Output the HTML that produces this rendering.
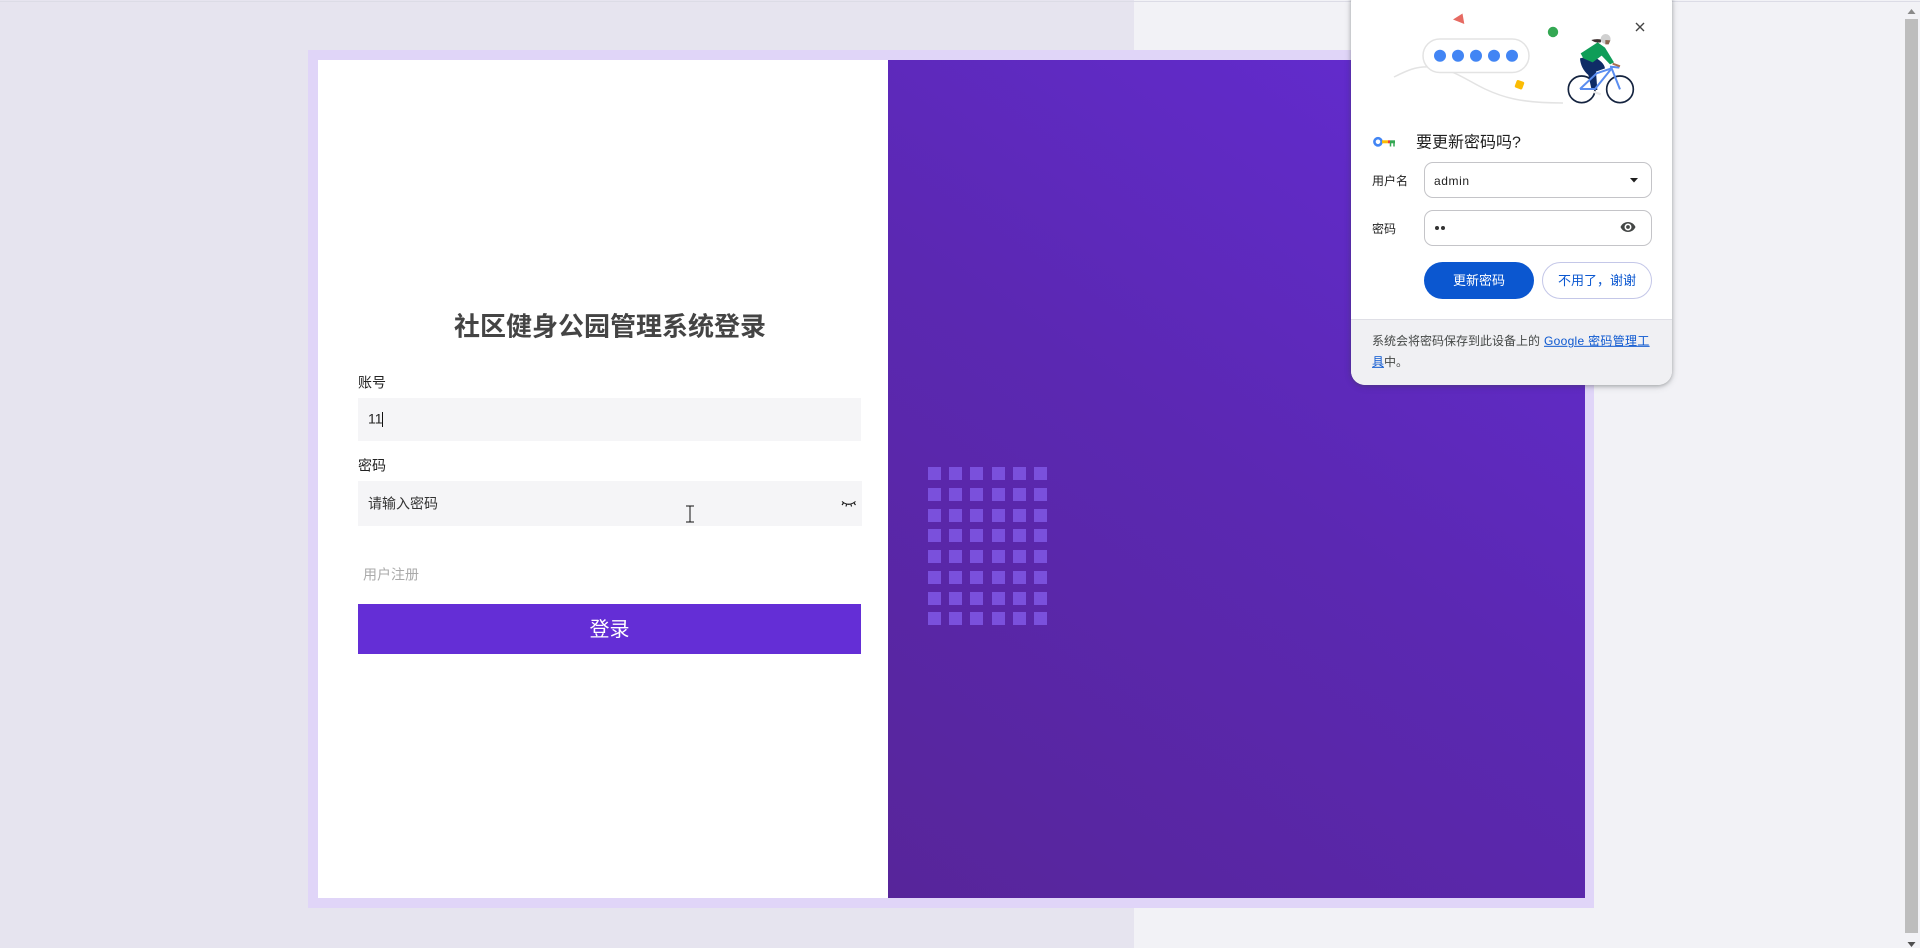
<!DOCTYPE html>
<html lang="zh"><head><meta charset="utf-8"><title>社区健身公园管理系统登录</title>
<style>
html,body{margin:0;padding:0;width:1920px;height:948px;overflow:hidden;background:#f2f2f6;font-family:"Liberation Sans","Noto Sans CJK SC",sans-serif}
div,a,span{position:absolute;white-space:nowrap}
svg{position:absolute}
.sq{width:12.5px;height:12.5px;background:#7a50dc}
.t{transform:translateY(-50%);line-height:1.2}
</style></head><body>
<div style="left:0;top:0;width:1134px;height:948px;background:#e6e4ef"></div>
<div style="left:0;top:1px;width:1920px;height:1px;background:#dcdce6"></div>
<div style="left:308px;top:50px;width:1286px;height:858px;background:#e0d5f8"></div>
<div style="left:318px;top:60px;width:570px;height:838px;background:#fff"></div>
<div style="left:888px;top:60px;width:697px;height:838px;background:linear-gradient(214deg,#642cd4 0%,#5b28b2 50%,#57259a 100%)"></div>

<div class="t" style="left:0;width:1220px;text-align:center;top:327px;font-size:26px;font-weight:700;color:#444">社区健身公园管理系统登录</div>
<div class="t" style="left:358px;top:383px;font-size:14px;color:#222">账号</div>
<div style="left:358px;top:398px;width:503px;height:43px;background:#f5f5f7"></div>
<div class="t" style="left:368px;top:419px;font-size:14px;color:#222">11</div>
<div style="left:382px;top:412px;width:1px;height:15px;background:#111"></div>
<div class="t" style="left:358px;top:466px;font-size:14px;color:#222">密码</div>
<div style="left:358px;top:481px;width:504px;height:45px;background:#f5f5f7"></div>
<div class="t" style="left:368px;top:504px;font-size:14px;color:#333">请输入密码</div>
<svg style="left:840px;top:496px" width="18" height="14" viewBox="0 0 18 14" fill="none" stroke="#111" stroke-width="1.1"><path d="M2 5.5Q8.5 11 15.5 5.5"/><path d="M3.5 7L2 9M6.5 8.5L6 10.5M11 8.5L11.5 10.5M14 7L15.5 9"/></svg>
<svg style="left:684px;top:505px" width="12" height="18" viewBox="0 0 12 18" fill="none" stroke="#111" stroke-width="1"><path d="M2 1H10M6 1V17M2 17H10"/></svg>
<div class="t" style="left:363px;top:575px;font-size:14px;color:#aaa">用户注册</div>
<div style="left:358px;top:604px;width:503px;height:50px;background:#642ed6"></div>
<div class="t" style="left:358px;width:503px;text-align:center;top:630px;font-size:20px;color:#fff">登录</div>

<!-- grid -->
<div class="sq" style="left:928px;top:467px"></div><div class="sq" style="left:949px;top:467px"></div><div class="sq" style="left:970px;top:467px"></div><div class="sq" style="left:992px;top:467px"></div><div class="sq" style="left:1013px;top:467px"></div><div class="sq" style="left:1034px;top:467px"></div>
<div class="sq" style="left:928px;top:488px"></div><div class="sq" style="left:949px;top:488px"></div><div class="sq" style="left:970px;top:488px"></div><div class="sq" style="left:992px;top:488px"></div><div class="sq" style="left:1013px;top:488px"></div><div class="sq" style="left:1034px;top:488px"></div>
<div class="sq" style="left:928px;top:509px"></div><div class="sq" style="left:949px;top:509px"></div><div class="sq" style="left:970px;top:509px"></div><div class="sq" style="left:992px;top:509px"></div><div class="sq" style="left:1013px;top:509px"></div><div class="sq" style="left:1034px;top:509px"></div>
<div class="sq" style="left:928px;top:529px"></div><div class="sq" style="left:949px;top:529px"></div><div class="sq" style="left:970px;top:529px"></div><div class="sq" style="left:992px;top:529px"></div><div class="sq" style="left:1013px;top:529px"></div><div class="sq" style="left:1034px;top:529px"></div>
<div class="sq" style="left:928px;top:550px"></div><div class="sq" style="left:949px;top:550px"></div><div class="sq" style="left:970px;top:550px"></div><div class="sq" style="left:992px;top:550px"></div><div class="sq" style="left:1013px;top:550px"></div><div class="sq" style="left:1034px;top:550px"></div>
<div class="sq" style="left:928px;top:571px"></div><div class="sq" style="left:949px;top:571px"></div><div class="sq" style="left:970px;top:571px"></div><div class="sq" style="left:992px;top:571px"></div><div class="sq" style="left:1013px;top:571px"></div><div class="sq" style="left:1034px;top:571px"></div>
<div class="sq" style="left:928px;top:592px"></div><div class="sq" style="left:949px;top:592px"></div><div class="sq" style="left:970px;top:592px"></div><div class="sq" style="left:992px;top:592px"></div><div class="sq" style="left:1013px;top:592px"></div><div class="sq" style="left:1034px;top:592px"></div>
<div class="sq" style="left:928px;top:612px"></div><div class="sq" style="left:949px;top:612px"></div><div class="sq" style="left:970px;top:612px"></div><div class="sq" style="left:992px;top:612px"></div><div class="sq" style="left:1013px;top:612px"></div><div class="sq" style="left:1034px;top:612px"></div>

<!-- scrollbar -->
<div style="left:1905px;top:19px;width:13px;height:914px;background:#bdbdbd"></div>
<svg style="left:1905px;top:8px" width="13" height="7"><path d="M6.5 1L10.5 6H2.5Z" fill="#8a8a8a"/></svg>
<svg style="left:1905px;top:941px" width="13" height="7"><path d="M2.5 1H10.5L6.5 6Z" fill="#505050"/></svg>

<!-- popup -->
<div style="left:1351px;top:-12px;width:321px;height:397px;background:#fff;border-radius:14px;box-shadow:0 1px 4px rgba(60,64,67,.4),0 2px 8px rgba(60,64,67,.12);overflow:hidden">
  <div style="left:0;top:331px;width:321px;height:66px;background:#f0f0f3;border-top:1px solid #dfdfe6;box-sizing:border-box"></div>
</div>
<svg style="left:1340px;top:0" width="340" height="160" viewBox="0 0 340 160" fill="none">
  <path d="M54 77C66 71 76 66 90 67C112 68 126 80 145 89C162 97 180 103 223 103" stroke="#e3e3e3" stroke-width="1.5"/>
  <path d="M113 19.5L122.500 13.500L124.300 24Z" fill="#e66a62"/>
  <circle cx="213" cy="32" r="5.2" fill="#34a853"/>
  <rect x="83" y="39" width="106" height="33.500" rx="16.700" fill="#fff" stroke="#e3e3e3" stroke-width="1.500"/>
  <circle cx="100" cy="55.700" r="6" fill="#4285f4"/><circle cx="118" cy="55.700" r="6" fill="#4285f4"/><circle cx="136" cy="55.700" r="6" fill="#4285f4"/><circle cx="154" cy="55.700" r="6" fill="#4285f4"/><circle cx="172" cy="55.700" r="6" fill="#4285f4"/>
  <rect x="175.500" y="80.700" width="8" height="8" rx="1.500" transform="rotate(20 179.500 84.700)" fill="#fbbc04"/>
  <g transform="translate(220 25) scale(.3333)">
    <circle cx="65" cy="193" r="40" stroke="#14233f" stroke-width="5"/>
    <circle cx="180" cy="193" r="40" stroke="#14233f" stroke-width="5"/>
    <path d="M100 200L122 208" stroke="#e8e8e8" stroke-width="7"/>
    <path d="M60 100Q62 130 85 150L95 195L112 195L108 140L135 130Q132 110 95 92Z" fill="#0f2c66"/>
    <path d="M60 192H105L155 130L110 145L60 192M155 130L180 193M150 125L178 128" stroke="#5a8df0" stroke-width="6" stroke-linejoin="round"/>
    <path d="M62 85L113 52L135 68L162 112L150 118L125 92L98 112L70 100Z" fill="#0f9d58"/>
    <path d="M158 116L180 124" stroke="#a86d50" stroke-width="6"/>
    <path d="M94 45Q110 40 125 44L122 52Q105 55 94 45Z" fill="#3e3030"/>
    <circle cx="137" cy="42" r="15" fill="#d0d0d0"/>
    <path d="M136 45L151 46L146 58L136 58Z" fill="#8b6550"/>
    <path d="M228 0L248 18M248 0L228 18" stroke="#444" stroke-width="0"/>
  </g>
  <path d="M296 23L304 31M304 23L296 31" stroke="#444" stroke-width="1.400"/>
  <circle cx="38" cy="141.800" r="3.600" stroke="#4285f4" stroke-width="2.600"/>
  <path d="M42 141.800H48" stroke="#fbbc04" stroke-width="3"/><path d="M48 141.800H50" stroke="#ea4335" stroke-width="3"/><path d="M50 141.800H55" stroke="#34a853" stroke-width="3"/>
  <path d="M50.500 143V146.500M54 143V146.500" stroke="#34a853" stroke-width="1.500"/>
</svg>
<div class="t" style="left:1416px;top:143px;font-size:16px;color:#1f1f1f">要更新密码吗?</div>
<div class="t" style="left:1372px;top:181px;font-size:12px;color:#1f1f1f">用户名</div>
<div style="left:1424px;top:162px;width:228px;height:36px;box-sizing:border-box;border:1px solid #c4c4c8;border-radius:9px;background:#fff"></div>
<div class="t" style="left:1434px;top:181px;font-size:12px;letter-spacing:.6px;color:#1f1f1f">admin</div>
<svg style="left:1628px;top:177px" width="12" height="7"><path d="M2 1H10L6 5.500Z" fill="#1f1f1f"/></svg>
<div class="t" style="left:1372px;top:229px;font-size:12px;color:#1f1f1f">密码</div>
<div style="left:1424px;top:210px;width:228px;height:36px;box-sizing:border-box;border:1px solid #c4c4c8;border-radius:9px;background:#fff"></div>
<div style="left:1435px;top:226px;width:4px;height:4px;border-radius:50%;background:#333"></div>
<div style="left:1441px;top:226px;width:4px;height:4px;border-radius:50%;background:#333"></div>
<svg style="left:1620px;top:220px" width="16" height="14" viewBox="0 0 16 14"><path fill="#444746" fill-rule="evenodd" d="M8 2C4.600 2 1.700 4.100.5 7C1.700 9.900 4.600 12 8 12S14.300 9.900 15.500 7C14.300 4.100 11.400 2 8 2ZM8 10.500A3.500 3.500 0 1 1 8 3.500A3.500 3.500 0 0 1 8 10.500ZM8 5.100A1.900 1.900 0 1 0 8 8.900A1.900 1.900 0 0 0 8 5.100Z"/></svg>
<div style="left:1424px;top:262px;width:110px;height:37px;border-radius:19px;background:#0b57d0"></div>
<div class="t" style="left:1424px;width:110px;text-align:center;top:281px;font-size:13px;color:#fff">更新密码</div>
<div style="left:1542px;top:262px;width:110px;height:37px;box-sizing:border-box;border:1px solid #c4c7e8;border-radius:19px;background:#fff"></div>
<div class="t" style="left:1542px;width:110px;text-align:center;top:281px;font-size:13px;color:#0b57d0">不用了，谢谢</div>
<div class="t" style="left:1372px;top:341px;font-size:12px;color:#444746">系统会将密码保存到此设备上的</div>
<a class="t" style="left:1544px;top:341px;font-size:12px;letter-spacing:.3px;color:#0b57d0;text-decoration:underline">Google 密码管理工</a>
<a class="t" style="left:1372px;top:362px;font-size:12px;color:#0b57d0;text-decoration:underline">具</a>
<div class="t" style="left:1384px;top:362px;font-size:12px;color:#444746">中。</div>
</body></html>
